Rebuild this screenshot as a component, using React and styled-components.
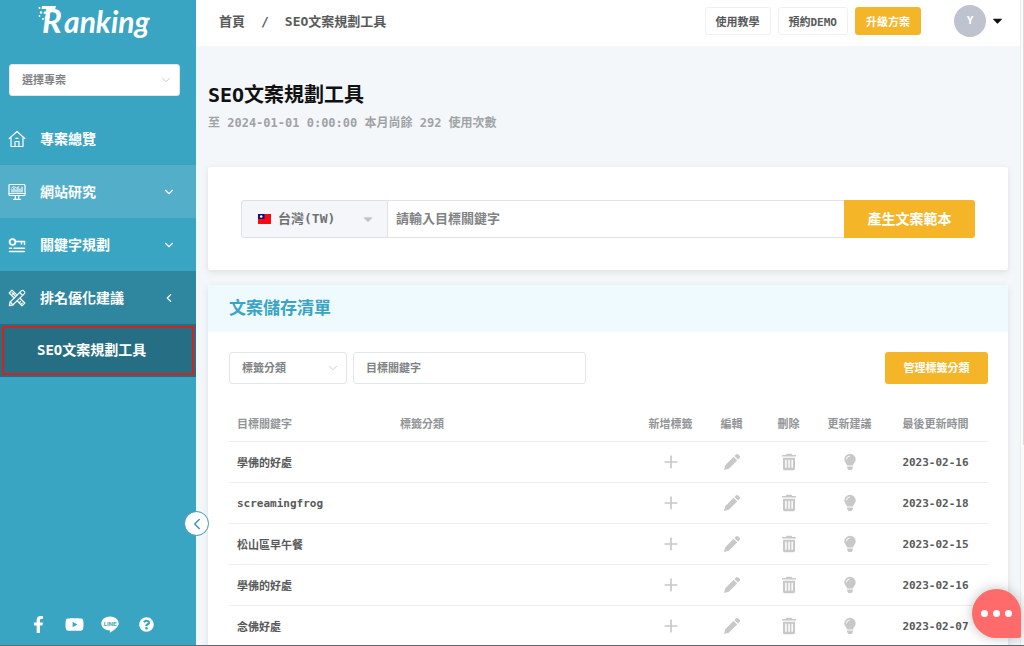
import React, { useState } from "react";
import styled, { createGlobalStyle, css } from "styled-components";
import { ChevronDown, ChevronLeft, Plus } from "lucide-react";
import { FaFacebookF, FaYoutube, FaQuestionCircle, FaCaretDown } from "react-icons/fa";

const rows = [
  { id: 1, keyword: "學佛的好處", date: "2023-02-16" },
  { id: 2, keyword: "screamingfrog", date: "2023-02-18" },
  { id: 3, keyword: "松山區早午餐", date: "2023-02-15" },
  { id: 4, keyword: "學佛的好處", date: "2023-02-16" },
  { id: 5, keyword: "念佛好處", date: "2023-02-07" },
];

function Logo() {
  return (
    <svg width="122" height="44" viewBox="0 0 122 44" role="img" aria-label="Ranking">
      <g fill="#fff">
        <circle cx="2.5" cy="8" r="1" />
        <circle cx="4" cy="12.500" r="1.2" />
        <circle cx="2.500" cy="16" r="0.9" />
        <circle cx="6" cy="19" r="1" />
        <path d="M5 6h14l-.8 3H4.600z M7 11.500h6l-.7 2.300H6.500z M8 16.500h5l-.6 2.300H7.500z" />
        <text x="5" y="33" fontFamily="Lato, sans-serif" fontStyle="italic" fontWeight="700" fontSize="33">
          R
        </text>
        <text x="27" y="33" fontFamily="Lato, sans-serif" fontStyle="italic" fontWeight="700" fontSize="30">
          anking
        </text>
      </g>
    </svg>
  );
}

function HomeIcon() {
  return (
    <svg width="18" height="18" viewBox="0 0 18 18" fill="none" stroke="#fff" strokeWidth="1.200" strokeLinejoin="round" strokeLinecap="round">
      <path d="M1.200 8.500 9 1.500l7.800 7" />
      <path d="M3 7.500v9h12v-9" />
      <path d="M7 16.500v-5h4v5" />
      <path d="M7.800 8.300h2.400" />
    </svg>
  );
}

function MonitorIcon() {
  return (
    <svg width="18" height="18" viewBox="0 0 18 18" fill="none" stroke="#fff" strokeWidth="1.200" strokeLinecap="round">
      <rect x="1" y="1.500" width="16" height="11" rx="1" />
      <path d="M1 10.500h16M7.300 12.500v3.500M10.700 12.500v3.500M5.500 16.300h7" />
      <path d="M4 9V6.500M6 9V5M8 9V6.500M10 9V4.500M12 9V6M14 9V4" />
      <path d="M3.500 5 6 3.500 8.500 5 11 3.500" strokeWidth=".8" />
    </svg>
  );
}

function KeyIcon() {
  return (
    <svg width="18" height="18" viewBox="0 0 18 18" fill="none" stroke="#fff" strokeLinecap="round">
      <circle cx="4.500" cy="6" r="2.900" strokeWidth="1.900" />
      <path d="M7.500 5.500h9v3M13.500 5.500v2.500" strokeWidth="1.500" />
      <path d="M1.500 12.200h2M6 12.200h10.500M1.500 15.500h15" strokeWidth="1.600" />
    </svg>
  );
}

function ToolsIcon() {
  return (
    <svg width="18" height="18" viewBox="0 0 18 18" fill="none" stroke="#fff" strokeWidth="1.200" strokeLinejoin="round" strokeLinecap="round">
      <path d="M7.200 6.800 4 3.600M4 1.200 1.200 4l5 5M4 1.200l5 5M9.300 12l4.700 4.800 2.800-2.800-4.800-4.700" />
      <path d="M5.800 4.300 4.800 5.300M12.500 12.500l-1 1M14.300 14.200l-1 1" />
      <path d="M1.300 16.700l.9-3.700L13.300 1.900c.8-.8 1.800-.7 2.400 0l.5.500c.7.600.8 1.600 0 2.400L5 15.800z" />
      <path d="M11.700 3.500l2.900 2.900M2.200 13 5 15.800" />
    </svg>
  );
}

function LineIcon() {
  return (
    <svg width="18" height="17" viewBox="0 0 18 17" aria-hidden="true">
      <path fill="#fff" d="M9 .5c4.800 0 8.700 3 8.700 6.900 0 3.300-4.400 6.400-8.400 9-.5.300-.6-.1-.5-.6l.2-1.400C4.200 14.300.3 11.300.3 7.400S4.200.5 9 .5z" />
      <text x="9" y="9.500" fill="#3aa4c3" fontSize="6" fontWeight="700" fontFamily="Roboto, sans-serif" textAnchor="middle">
        LINE
      </text>
    </svg>
  );
}

function TaiwanFlag() {
  return (
    <svg width="13" height="10" viewBox="0 0 13 10" aria-hidden="true">
      <rect width="13" height="10" fill="#fb0a12" />
      <rect width="6.500" height="5" fill="#10108c" />
      <circle cx="3.200" cy="2.500" r="1.300" fill="#fff" />
    </svg>
  );
}

function PencilIcon() {
  return (
    <svg width="18" height="18" viewBox="0 0 18 18" aria-hidden="true">
      <path
        fill="currentColor"
        d="M1 17l1.200-4.800L10.600 3.800l3.600 3.600-8.400 8.400zM11.400 3l1.500-1.500c.7-.7 1.600-.7 2.300 0l1.300 1.300c.7.700.7 1.600 0 2.300L15 6.600z"
      />
    </svg>
  );
}

function TrashIcon() {
  return (
    <svg width="16" height="18" viewBox="0 0 16 18" aria-hidden="true">
      <path
        fill="currentColor"
        fillRule="evenodd"
        d="M5.500.8h5l.7 1.200H15v1.500H1V2h3.800zM2 4.800h12v10.700c0 1-.6 1.700-1.600 1.700H3.600c-1 0-1.600-.7-1.600-1.700zm2.200 2v8h1.500v-8zm3.100 0v8h1.500v-8zm3.100 0v8h1.500v-8z"
      />
    </svg>
  );
}

function BulbIcon() {
  return (
    <svg width="14" height="18" viewBox="0 0 14 18" aria-hidden="true">
      <path
        fill="currentColor"
        d="M7 .8a5.700 5.700 0 0 1 5.700 5.700c0 2.200-1.500 3.200-2.300 4.700-.2.400-.3.800-.3 1.300H3.900c0-.5-.1-.9-.3-1.300C2.800 9.700 1.300 8.700 1.300 6.500A5.700 5.700 0 0 1 7 .8zM4.200 13.500h5.600v1.700L8.500 17h-3l-1.300-1.800z"
      />
      <path d="M3.500 6.300A3.400 3.400 0 0 1 6.800 3" fill="none" stroke="#fff" strokeWidth="1" />
    </svg>
  );
}

function Sidebar() {
  return (
    <Side>
      <LogoLink href="#">
        <Logo />
      </LogoLink>
      <ProjectSelect>
        <Select aria-label="選擇專案" defaultValue="">
          <option value="">選擇專案</option>
        </Select>
        <SelectArrow size={14} />
      </ProjectSelect>
      <nav>
        <MenuItem href="#">
          <HomeIcon />
          <span>專案總覽</span>
        </MenuItem>
        <MenuItem href="#" $tone="hover">
          <MonitorIcon />
          <span>網站研究</span>
          <ChevronDown size={14} />
        </MenuItem>
        <MenuItem href="#">
          <KeyIcon />
          <span>關鍵字規劃</span>
          <ChevronDown size={14} />
        </MenuItem>
        <MenuItem href="#" $tone="open">
          <ToolsIcon />
          <span>排名優化建議</span>
          <ChevronLeft size={14} />
        </MenuItem>
        <SubItem href="#">SEO文案規劃工具</SubItem>
      </nav>
      <Social>
        <a href="#" aria-label="Facebook">
          <FaFacebookF size={17} />
        </a>
        <a href="#" aria-label="YouTube">
          <FaYoutube size={19} />
        </a>
        <a href="#" aria-label="LINE">
          <LineIcon />
        </a>
        <a href="#" aria-label="Help">
          <FaQuestionCircle size={15} />
        </a>
      </Social>
      <Collapse type="button" aria-label="Collapse">
        <ChevronLeft size={18} />
      </Collapse>
    </Side>
  );
}

function Header() {
  return (
    <TopBar>
      <Breadcrumb>
        <a href="#">首頁</a>
        <span>/</span>
        <span>SEO文案規劃工具</span>
      </Breadcrumb>
      <HeaderButtons>
        <HeaderButton type="button">使用教學</HeaderButton>
        <HeaderButton type="button">預約DEMO</HeaderButton>
        <HeaderButton type="button" $primary>
          升級方案
        </HeaderButton>
      </HeaderButtons>
      <Profile type="button">
        <Avatar>Y</Avatar>
        <FaCaretDown size={15} />
      </Profile>
    </TopBar>
  );
}

function SearchCard() {
  const [keyword, setKeyword] = useState("");
  return (
    <SearchForm onSubmit={(e) => e.preventDefault()}>
      <Region>
        <RegionSelect aria-label="地區" defaultValue="tw">
          <option value="tw">台灣(TW)</option>
        </RegionSelect>
        <FlagSlot>
          <TaiwanFlag />
        </FlagSlot>
        <RegionCaret size={14} />
      </Region>
      <SearchInput
        aria-label="目標關鍵字"
        placeholder="請輸入目標關鍵字"
        value={keyword}
        onChange={(e) => setKeyword(e.target.value)}
      />
      <SubmitButton type="submit">產生文案範本</SubmitButton>
    </SearchForm>
  );
}

function SavedList() {
  return (
    <Card>
      <CardTitle>文案儲存清單</CardTitle>
      <CardBody>
        <Filters>
          <FilterSelect>
            <Select aria-label="標籤分類" defaultValue="">
              <option value="">標籤分類</option>
            </Select>
            <SelectArrow size={14} />
          </FilterSelect>
          <FilterInput aria-label="目標關鍵字" placeholder="目標關鍵字" />
          <ManageButton type="button">管理標籤分類</ManageButton>
        </Filters>
        <Table>
          <colgroup>
            <col width="163" />
            <col />
            <col width="63" />
            <col width="59" />
            <col width="55" />
            <col width="67" />
            <col width="105" />
          </colgroup>
          <thead>
            <tr>
              <th>目標關鍵字</th>
              <th>標籤分類</th>
              <th>新增標籤</th>
              <th>編輯</th>
              <th>刪除</th>
              <th>更新建議</th>
              <th>最後更新時間</th>
            </tr>
          </thead>
          <tbody>
            {rows.map((row) => (
              <tr key={row.id}>
                <td>{row.keyword}</td>
                <td />
                <td>
                  <IconButton type="button" aria-label="新增標籤">
                    <Plus size={20} strokeWidth={2} />
                  </IconButton>
                </td>
                <td>
                  <IconButton type="button" aria-label="編輯">
                    <PencilIcon />
                  </IconButton>
                </td>
                <td>
                  <IconButton type="button" aria-label="刪除">
                    <TrashIcon />
                  </IconButton>
                </td>
                <td>
                  <IconButton type="button" aria-label="更新建議">
                    <BulbIcon />
                  </IconButton>
                </td>
                <td>{row.date}</td>
              </tr>
            ))}
          </tbody>
        </Table>
      </CardBody>
    </Card>
  );
}

export default function App() {
  return (
    <>
      <GlobalStyle />
      <Page>
        <Sidebar />
        <Main>
          <Header />
          <Content>
            <Title>SEO文案規劃工具</Title>
            <Quota>至 2024-01-01 0:00:00 本月尚餘 292 使用次數</Quota>
            <SearchCard />
            <SavedList />
          </Content>
        </Main>
        <ScrollTrack>
          <ScrollThumb />
        </ScrollTrack>
        <ChatButton type="button" aria-label="Chat">
          <i />
          <i />
          <i />
        </ChatButton>
      </Page>
    </>
  );
}

const GlobalStyle = createGlobalStyle`
  * {
    box-sizing: border-box;
  }
  body {
    margin: 0;
    background: #f4f7f9;
    color: #58595b;
  }
  body, button, input, select {
    font-family: "DejaVu Sans Mono", "Noto Sans CJK TC", monospace;
    font-weight: 700;
  }
  button {
    padding: 0;
    border: none;
    cursor: pointer;
  }
  a {
    color: inherit;
    text-decoration: none;
  }
`;

const Page = styled.div`
  display: flex;
  height: 100vh;
  overflow: hidden;
  border-bottom: 1px solid #5d6b73;
`;

const Side = styled.aside`
  position: relative;
  flex: 0 0 196px;
  display: flex;
  flex-direction: column;
  background: #3aa4c3;
  color: #fff;
`;

const LogoLink = styled.a`
  display: flex;
  padding-left: 37px;
  height: 64px;
`;

const control = css`
  border: 1px solid #e3e6ea;
  border-radius: 3px;
  background: #fff;
`;

const SelectBox = styled.div`
  ${control}
  display: grid;
  align-items: center;
  height: 32px;
`;

const ProjectSelect = styled(SelectBox)`
  margin: 0 16px 16px 9px;
`;

const FilterSelect = styled(SelectBox)`
  width: 118px;
`;

const Select = styled.select`
  grid-area: 1 / 1;
  appearance: none;
  width: 100%;
  height: 100%;
  padding: 0 12px;
  border: none;
  background: none;
  color: #808285;
  font-size: 11px;
`;

const SelectArrow = styled(ChevronDown)`
  grid-area: 1 / 1;
  justify-self: end;
  margin-right: 6px;
  color: #c0c4cc;
  stroke-width: 1.5;
  pointer-events: none;
`;

const tones = {
  hover: "#52aec9",
  open: "#2e869f",
};

const MenuItem = styled.a`
  display: flex;
  align-items: center;
  gap: 14px;
  height: 53px;
  padding: 0 20px 0 8px;
  background: ${(props) => tones[props.$tone] || "transparent"};
  font-size: 14px;

  span {
    flex: 1;
    padding-bottom: 2px;
  }
`;

const SubItem = styled.a`
  display: flex;
  align-items: center;
  height: 53px;
  padding: 0 0 3px 37px;
  outline: 2px solid #d7211e;
  outline-offset: -4px;
  background: #266e83;
  font-size: 14px;
`;

const Social = styled.div`
  display: grid;
  grid-template-columns: repeat(4, 36px);
  margin-top: auto;
  padding: 0 0 11px 20px;

  a {
    display: flex;
    align-items: center;
    justify-content: center;
  }
`;

const Collapse = styled.button`
  position: absolute;
  z-index: 2;
  right: -13px;
  bottom: 109px;
  width: 25px;
  height: 25px;
  display: flex;
  align-items: center;
  justify-content: center;
  border: 1px solid #3a98b3;
  border-radius: 50%;
  background: #fff;
  color: #3a98b3;
`;

const Main = styled.main`
  flex: 1;
  min-width: 0;
`;

const TopBar = styled.header`
  display: flex;
  align-items: center;
  height: 46px;
  padding: 0 15px 5px 23px;
  background: #fff;
`;

const Breadcrumb = styled.div`
  display: flex;
  align-items: baseline;
  gap: 16px;
  font-size: 13px;
`;

const HeaderButtons = styled.div`
  display: flex;
  gap: 7px;
  margin-left: auto;
`;

const HeaderButton = styled.button`
  height: 28px;
  padding: 0 10px;
  border: 1px solid ${(props) => (props.$primary ? "#f5b529" : "#eef0f2")};
  border-radius: 3px;
  background: ${(props) => (props.$primary ? "#f5b529" : "#fff")};
  color: ${(props) => (props.$primary ? "#fff" : "#58595b")};
  font-size: 11px;
`;

const Profile = styled.button`
  display: flex;
  align-items: center;
  gap: 4px;
  margin-left: 33px;
  background: none;
  color: #111;
`;

const Avatar = styled.span`
  width: 32px;
  height: 32px;
  border-radius: 50%;
  background: #bfc3cf;
  color: #fff;
  font-size: 11px;
  line-height: 32px;
`;

const Content = styled.div`
  padding: 35px 12px 0;
`;

const Title = styled.h1`
  margin: 0;
  color: #111;
  font-size: 20px;
  line-height: 28px;
`;

const Quota = styled.p`
  margin: 5px 0 34px;
  color: #a0a3a6;
  font-size: 12px;
  line-height: 19px;
`;

const cardStyle = css`
  border-radius: 3px;
  background: #fff;
  box-shadow: 0 2px 6px rgba(60, 70, 90, 0.13);
`;

const SearchForm = styled.form`
  ${cardStyle}
  display: flex;
  margin-bottom: 15px;
  padding: 33px 33px 32px;
`;

const Region = styled.div`
  display: grid;
  align-items: center;
  flex: 0 0 147px;
  height: 38px;
  border: 1px solid #dde1e7;
  border-radius: 3px 0 0 3px;
  background: #f5f6fa;
`;

const RegionSelect = styled.select`
  grid-area: 1 / 1;
  appearance: none;
  width: 100%;
  height: 100%;
  padding: 0 36px 2px;
  border: none;
  background: none;
  color: #707275;
  font-size: 13px;
`;

const FlagSlot = styled.span`
  grid-area: 1 / 1;
  display: flex;
  margin-left: 16px;
  pointer-events: none;
`;

const RegionCaret = styled(FaCaretDown)`
  grid-area: 1 / 1;
  justify-self: end;
  margin-right: 12px;
  color: #c0c4cc;
  pointer-events: none;
`;

const SearchInput = styled.input`
  flex: 1;
  min-width: 0;
  padding: 0 8px 2px;
  border: 1px solid #dfe3e6;
  border-width: 1px 0;
  outline: none;
  font-size: 13px;

  &::placeholder {
    color: #808285;
  }
`;

const PrimaryButton = styled.button`
  padding-bottom: 3px;
  border-radius: 3px;
  background: #f5b529;
  color: #fff;
`;

const SubmitButton = styled(PrimaryButton)`
  flex: 0 0 131px;
  border-radius: 0 3px 3px 0;
  font-size: 14px;
`;

const ManageButton = styled(PrimaryButton)`
  width: 103px;
  height: 32px;
  margin-left: auto;
  font-size: 11px;
`;

const Card = styled.section`
  ${cardStyle}
`;

const CardTitle = styled.h2`
  margin: 0;
  padding: 0 21px;
  background: #effaff;
  color: #3aa4c3;
  font-size: 17px;
  line-height: 47px;
`;

const CardBody = styled.div`
  padding: 20px 20px 20px 21px;
`;

const Filters = styled.div`
  display: flex;
  gap: 6px;
  margin-bottom: 20px;
`;

const FilterInput = styled.input`
  ${control}
  width: 233px;
  height: 32px;
  padding: 0 12px;
  outline: none;
  font-size: 11px;

  &::placeholder {
    color: #808285;
  }
`;

const Table = styled.table`
  width: 100%;
  table-layout: fixed;
  border-spacing: 0;
  font-size: 11px;

  th,
  td {
    height: 41px;
    padding: 0;
    border-bottom: 1px solid #eceef0;
    text-align: center;
    vertical-align: middle;
  }
  th {
    height: 38px;
    color: #929497;
  }
  th:nth-child(-n + 2),
  td:nth-child(-n + 2) {
    padding-left: 8px;
    text-align: left;
  }
`;

const IconButton = styled.button`
  display: inline-flex;
  background: none;
  color: #c8c8c8;
  vertical-align: middle;
`;

const ScrollTrack = styled.div`
  flex: 0 0 4px;
  border-left: 1px solid #eaebee;
  background: #fafafb;
`;

const ScrollThumb = styled.div`
  height: 69%;
  margin-left: 2px;
  background: #dcdce0;
`;

const ChatButton = styled.button`
  position: fixed;
  z-index: 3;
  right: 3px;
  bottom: 8px;
  width: 49px;
  height: 49px;
  display: flex;
  align-items: center;
  justify-content: center;
  gap: 5px;
  border-radius: 50% 50% 2px 50%;
  background: #ff6b6b;
  box-shadow: 0 0 12px rgba(0, 0, 0, 0.25);

  i {
    width: 7px;
    height: 7px;
    border-radius: 50%;
    background: #fff;
  }
`;
